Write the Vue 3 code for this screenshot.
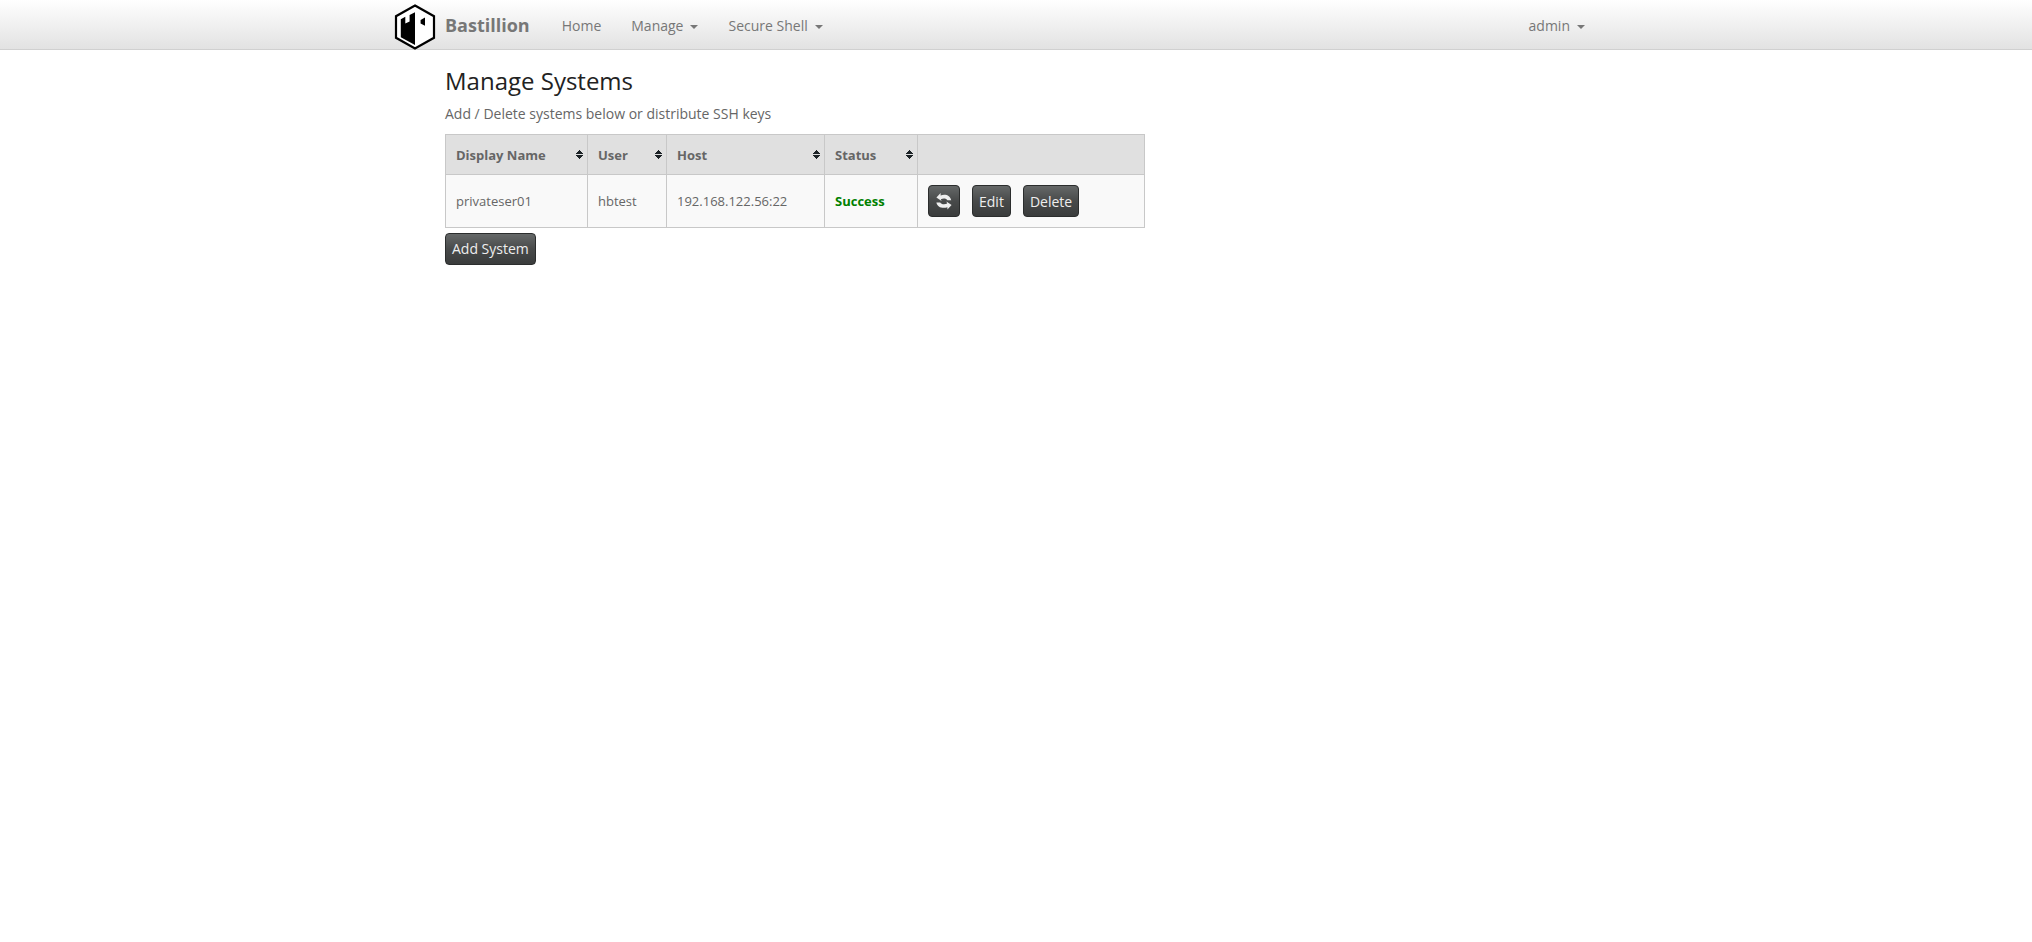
<script setup>
import { ref } from 'vue'

const menus = [
  { label: 'Home', dropdown: false },
  { label: 'Manage', dropdown: true },
  { label: 'Secure Shell', dropdown: true },
]
const columns = [
  { key: 'name', label: 'Display Name' },
  { key: 'user', label: 'User' },
  { key: 'host', label: 'Host' },
  { key: 'status', label: 'Status' },
]
const systems = ref([
  { name: 'privateser01', user: 'hbtest', host: '192.168.122.56:22', status: 'Success' },
])
</script>

<template>
  <nav class="navbar">
    <div class="container bar">
      <a class="logo" href="#" aria-label="Bastillion home">
        <svg width="42" height="46" viewBox="0 0 42 46" aria-hidden="true">
          <path d="M21 1.5 40 12.2V33.8L21 44.5 2 33.8V12.2Z" fill="#fff" stroke="#000" stroke-width="2.2" />
          <path d="M6.8 15.3 11.3 12.8V19.6L15.6 17.4V11L21 8.2V41L6.8 33.2Z" />
          <path d="M31 13.5V21.8L26.6 19.4V16Z" />
        </svg>
      </a>
      <a class="brand" href="#">Bastillion</a>
      <ul class="menu">
        <li v-for="item in menus" :key="item.label">
          <a href="#">{{ item.label }}<span v-if="item.dropdown" class="caret"></span></a>
        </li>
      </ul>
      <ul class="menu account">
        <li><a href="#">admin<span class="caret"></span></a></li>
      </ul>
    </div>
  </nav>

  <main class="container">
    <h1>Manage Systems</h1>
    <p>Add / Delete systems below or distribute SSH keys</p>
    <table>
      <colgroup>
        <col v-for="column in columns" :key="column.key" :class="'col-' + column.key" />
        <col />
      </colgroup>
      <thead>
        <tr>
          <th v-for="column in columns" :key="column.key" scope="col">
            <div class="heading">
              {{ column.label }}
              <svg width="7" height="9" viewBox="0 0 7 9" shape-rendering="crispEdges" aria-hidden="true">
                <path d="M3 0h1v1h1v1h1v1h1v1H0V3h1V2h1V1h1ZM0 5h7v1H6v1H5v1H4v1H3V8H2V7H1V6H0Z" />
              </svg>
            </div>
          </th>
          <th></th>
        </tr>
      </thead>
      <tbody>
        <tr v-for="system in systems" :key="system.name">
          <td>{{ system.name }}</td>
          <td>{{ system.user }}</td>
          <td>{{ system.host }}</td>
          <td class="success">{{ system.status }}</td>
          <td>
            <div class="actions">
              <button class="btn" type="button" aria-label="Refresh">
                <svg width="18" height="18" viewBox="0 0 18 18" aria-hidden="true">
                  <path d="M1.4 5.6 5.6 1V3.4C10.5 1.6 15.4 3.5 16.2 8.2H12.4C11.4 6.4 8.6 5.8 5.8 7.2L6.6 9Z" />
                  <path d="M16.6 13 12.4 17.6V15.2C7.5 17 2.2 15.1 1.4 10.4H5.2C6.2 12.2 9.4 12.8 12.2 11.4L11.4 9.6Z" />
                </svg>
              </button>
              <button class="btn" type="button">Edit</button>
              <button class="btn" type="button">Delete</button>
            </div>
          </td>
        </tr>
      </tbody>
    </table>
    <button class="btn" type="button">Add System</button>
  </main>
</template>

<style>
body {
  margin: 0;
  background: #fff;
}
</style>

<style scoped>
.navbar,
main {
  font: 14px/20px "Open Sans", "Noto Sans", sans-serif;
  color: #666;
}
.container {
  box-sizing: border-box;
  max-width: 1172px;
  margin: 0 auto;
  padding: 0 15px;
}
.navbar {
  border-bottom: 1px solid #d0d0d0;
  background: linear-gradient(#fff, #e2e2e2);
}
.bar {
  display: flex;
  align-items: center;
  height: 49px;
}
a {
  color: #777;
  text-decoration: none;
}
.logo {
  margin-left: -51px;
  padding: 4px 9px 0 0;
}
.logo svg {
  display: block;
}
.brand {
  font-size: 18px;
  font-weight: 700;
  margin-right: 17px;
}
.menu {
  display: flex;
  margin: 0;
  padding: 2px 0 0;
  list-style: none;
}
.menu a {
  display: block;
  padding: 0 15px;
}
.account {
  margin-left: auto;
}
.account a {
  padding-right: 2px;
}
.caret {
  display: inline-block;
  margin-left: 7px;
  border: 4px solid transparent;
  border-top-color: #777;
  border-bottom: 0;
  vertical-align: middle;
}
h1 {
  margin: 0;
  padding-top: 17px;
  font-size: 24px;
  line-height: 28px;
  font-weight: 400;
  color: #222;
}
p {
  margin: 9px 0 10px;
}
table {
  width: 700px;
  max-width: 100%;
  margin-bottom: 5px;
  border-collapse: collapse;
  table-layout: fixed;
  font-size: 13px;
  line-height: 19px;
}
.col-name {
  width: 142px;
}
.col-user {
  width: 79px;
}
.col-host {
  width: 158px;
}
.col-status {
  width: 93px;
}
th,
td {
  padding: 10px;
  border: 1px solid #c8c8c8;
  text-align: left;
}
th {
  padding: 11px 4px 9px 10px;
  background: #e0e0e0;
}
td {
  background: #f9f9f9;
}
.heading {
  display: flex;
  align-items: center;
  justify-content: space-between;
}
.heading svg {
  fill: #1c2226;
}
.heading svg {
  margin-bottom: 2px;
}
.success {
  color: #008000;
  font-weight: 700;
}
.actions {
  display: flex;
  gap: 12px;
}
.btn {
  box-sizing: border-box;
  display: block;
  height: 32px;
  padding: 0 6px;
  border: 1px solid #2b2d2d;
  border-radius: 4px;
  background: linear-gradient(#656868, #484a4a 50%, #3a3c3c);
  color: #eee;
  font: inherit;
  font-size: 14px;
}
.btn svg {
  display: block;
  fill: #eee;
}
</style>
